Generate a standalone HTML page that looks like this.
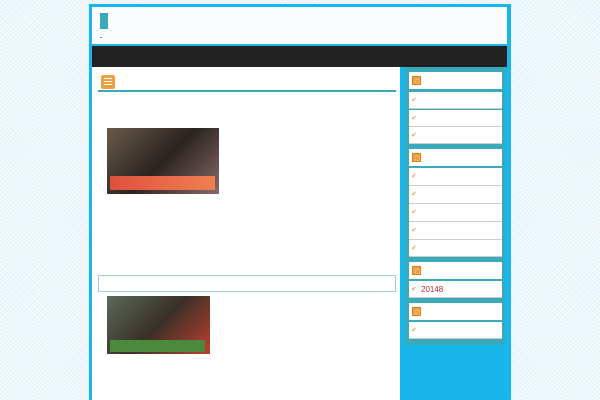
<!DOCTYPE html>
<html><head><meta charset="utf-8"><style>
*{margin:0;padding:0;box-sizing:border-box}
body{width:600px;height:400px;overflow:hidden;position:relative;font-family:"Liberation Sans","Noto Sans CJK JP",sans-serif;
background-color:#e3f2fb;background-image:repeating-linear-gradient(45deg,rgba(255,255,255,.6) 0 1px,transparent 1px 3px),repeating-linear-gradient(-45deg,rgba(255,255,255,.6) 0 1px,transparent 1px 3px);}
.a{position:absolute}
.w{background:#fff}
.hd{background:#fff;border-bottom:2px solid #3aa9b8}
.ico{position:absolute;left:3px;top:4px;width:9px;height:9px;background:#f0a040;border:1px solid #d88020}
.ico:after{content:"";position:absolute;left:2px;top:2px;width:3px;height:3px;border:1px solid #fff3}
.it{background:#fff;border-bottom:1px solid #ccc;font-size:8px;color:#b03040;line-height:17px;padding-left:12px;position:absolute}
.it:before{content:"✔";position:absolute;left:2px;top:0;color:#e8a060;font-size:7px}
</style></head><body>
<div class="a" style="left:89px;top:4px;width:422px;height:396px;background:#18b6ea"></div>
<div class="a w" style="left:92px;top:7px;width:415px;height:37px;background:#fbfcfe"></div>
<div class="a" style="left:100px;top:13px;width:8px;height:16px;background:#3aa9b8"></div>
<div class="a" style="left:100px;top:37px;width:2px;height:1px;background:#888"></div>
<div class="a" style="left:92px;top:46px;width:415px;height:21px;background:#222"></div>
<div class="a w" style="left:92px;top:67px;width:308px;height:333px"></div>
<div class="a" style="left:101px;top:75px;width:14px;height:14px;background:#f0a040;border-radius:2px"></div>
<div class="a" style="left:104px;top:78px;width:8px;height:1px;background:#fff;box-shadow:0 3px #fff,0 6px #fff"></div>
<div class="a" style="left:98px;top:90px;width:298px;height:2px;background:#3aa9b8"></div>
<div class="a" style="left:107px;top:128px;width:112px;height:66px;background:linear-gradient(135deg,#6a5a4a,#2a2420 50%,#8a6a6a);"></div>
<div class="a" style="left:110px;top:176px;width:105px;height:14px;background:linear-gradient(90deg,#e05040,#f08050)"></div>
<div class="a" style="left:98px;top:275px;width:298px;height:17px;border:1px solid #9fd0da;background:#fff"></div>
<div class="a" style="left:107px;top:296px;width:103px;height:58px;background:linear-gradient(135deg,#5a6a5a,#3a3028 50%,#c04030);"></div>
<div class="a" style="left:110px;top:340px;width:95px;height:12px;background:#4a8a3a"></div>
<div class="a" style="left:405px;top:67px;width:100px;height:278px;background:#3aa9b8"></div>
<div class="a hd" style="left:409px;top:72px;width:93px;height:19px"><div class="ico"></div></div>
<div class="it" style="left:409px;top:92px;width:93px;height:17px"></div>
<div class="it" style="left:409px;top:110px;width:93px;height:17px"></div>
<div class="it" style="left:409px;top:127px;width:93px;height:17px"></div>
<div class="a hd" style="left:409px;top:149px;width:93px;height:19px"><div class="ico"></div></div>
<div class="it" style="left:409px;top:168px;width:93px;height:18px"></div>
<div class="it" style="left:409px;top:186px;width:93px;height:18px"></div>
<div class="it" style="left:409px;top:204px;width:93px;height:18px"></div>
<div class="it" style="left:409px;top:222px;width:93px;height:18px"></div>
<div class="it" style="left:409px;top:240px;width:93px;height:17px"></div>
<div class="a hd" style="left:409px;top:262px;width:93px;height:19px"><div class="ico"></div></div>
<div class="it" style="left:409px;top:281px;width:93px;height:17px;padding-left:12px">20148</div>
<div class="a hd" style="left:409px;top:303px;width:93px;height:19px"><div class="ico"></div></div>
<div class="it" style="left:409px;top:322px;width:93px;height:17px"></div>
</body></html>
